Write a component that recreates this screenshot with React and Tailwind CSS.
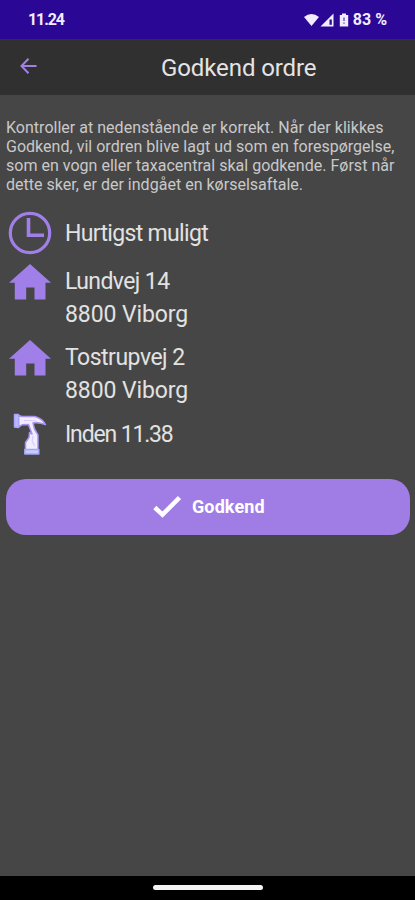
const ClockIcon = () => (
  <svg className="w-11 h-11" viewBox="0 0 44 44" fill="none" stroke="#a080e8">
    <circle cx="22" cy="22" r="19.7" strokeWidth="3.2" />
    <path d="M20.5 7v17.2h15.5" strokeWidth="3.6" />
  </svg>
);

const HouseIcon = () => (
  <svg className="w-11 h-11" viewBox="0 0 44 44" fill="#a080e8">
    <path d="M22 2 43 20.8H37.500V37.500H26.500V25.500H18.200V37.500H6.800V20.800H1Z" />
  </svg>
);

const HammerIcon = () => (
  <svg className="w-11 h-11 -mt-0.5" viewBox="0 0 44 44" strokeWidth="1.5" strokeLinejoin="round">
    <path
      d="M10.500 3.500 14 4.500h13C32 6 36 9.500 37.500 12.500c-4-1.500-8-2.500-12.500-1.500L26.500 17l3.500 6v15H17.500v-7.500l3.500-5 .5-5 2.500 1.500L20.500 12.500l-6 .2-4 2.300Z"
      fill="#f1edff"
      stroke="#a992f0"
    />
    <path d="M6.500 2.500h4V15.500l-4-.5Z" fill="#b8baff" stroke="#aaa5f8" />
    <path d="M16.800 37.500h14v4.500h-14Z" fill="#c5ccff" stroke="#a6a5f4" />
    <path d="M16 8.500h8l5 .8M25 24l-.8 5 2.300 5" fill="none" stroke="#d6cdff" strokeWidth="1.2" />
  </svg>
);

const StatusBar = () => (
  <div className="h-[39px] bg-[#2b0795] flex items-center px-7 text-[#f1edff] font-bold text-base">
    <span className="tracking-[-1.1px]">11.24</span>
    <div className="ml-auto flex items-center">
      <svg className="w-[46px] h-4 mr-[3px]" viewBox="0 0 46 16" fill="#f1edff">
        <path d="M0 5Q7.500 -1 15 5L7.500 14Z" />
        <path d="M16.500 14.500 29.500 1.500v13Z" />
        <path d="M25.500 7.500h2.300v5.300h-2.300Z" fill="#2b0795" />
        <path d="M38 1.500h4V3h2.200v11.500H35.800V3H38Z" />
        <path d="M39.300 5.500h1.400v3.500h-1.400ZM39.300 10.500h1.400v1.300h-1.400Z" fill="#6750b5" />
      </svg>
      <span className="whitespace-nowrap">83 %</span>
    </div>
  </div>
);

const rows = [
  {
    icon: <ClockIcon />,
    height: 'h-[51px]',
    pad: 'pt-1.5',
    lines: [{ text: 'Hurtigst muligt', tracking: 'tracking-[-0.67px]' }],
  },
  {
    icon: <HouseIcon />,
    height: 'h-[76px]',
    pad: 'pt-[3px]',
    lines: [
      { text: 'Lundvej 14', tracking: 'tracking-[-0.6px]' },
      { text: '8800 Viborg', tracking: 'tracking-[-0.1px]' },
    ],
  },
  {
    icon: <HouseIcon />,
    height: 'h-[76px]',
    pad: 'pt-[3px]',
    lines: [
      { text: 'Tostrupvej 2', tracking: 'tracking-[-0.5px]' },
      { text: '8800 Viborg', tracking: 'tracking-[-0.1px]' },
    ],
  },
  {
    icon: <HammerIcon />,
    height: 'h-[65px]',
    pad: 'pt-1',
    lines: [{ text: 'Inden 11.38', tracking: 'tracking-[-1.15px]' }],
  },
];

const App = () => {
  return (
    <div className="w-[415px] h-[900px] flex flex-col overflow-hidden bg-[#464646] font-['Roboto',sans-serif]">
      <StatusBar />

      <header className="h-14 bg-[#303030] flex items-center">
        <svg className="w-[17px] h-4 ml-5 -mt-0.5" viewBox="0 0 17 16" fill="none" stroke="#a080e8" strokeWidth="2">
          <path d="M8.500 .8 1.500 8l7 7.200M1.500 8H16.500" />
        </svg>
        <h1 className="ml-[124px] pt-0.5 text-2xl tracking-[-0.1px] text-[#e4e4e4] whitespace-nowrap">Godkend ordre</h1>
      </header>

      <main className="flex-1 px-1.5 pt-[23px]">
        <p className="text-base leading-[19px] tracking-[0.02px] text-[#c9c9c9] whitespace-nowrap">
          <span className="block">Kontroller at nedenstående er korrekt. Når der klikkes</span>
          <span className="block">Godkend, vil ordren blive lagt ud som en forespørgelse,</span>
          <span className="block">som en vogn eller taxacentral skal godkende. Først når</span>
          <span className="block">dette sker, er der indgået en kørselsaftale.</span>
        </p>

        <div className="mt-[17px]">
          {rows.map((row, i) => (
            <div key={i} className={'flex pl-0.5 ' + row.height}>
              {row.icon}
              <div className={'ml-[13px] text-[23px] leading-[33px] text-[#e2e2e2] whitespace-nowrap ' + row.pad}>
                {row.lines.map(line => (
                  <div key={line.text} className={line.tracking}>{line.text}</div>
                ))}
              </div>
            </div>
          ))}
        </div>

        <button className="w-[404px] h-14 rounded-[20px] bg-[#9f7de5] flex items-center pl-[147px] text-white text-lg font-bold">
          <svg className="w-7 h-6" viewBox="0 0 28 24" fill="none" stroke="white" strokeWidth="4.5">
            <path d="m1.800 12.500 7.700 7.200L26.500 2.500" />
          </svg>
          <span className="ml-[11px] tracking-[0.1px]">Godkend</span>
        </button>
      </main>

      <footer className="h-6 bg-black flex justify-center pt-[9px]">
        <div className="w-[110px] h-[5px] rounded-full bg-[#f4f4f4]" />
      </footer>
    </div>
  );
};

export default App;
